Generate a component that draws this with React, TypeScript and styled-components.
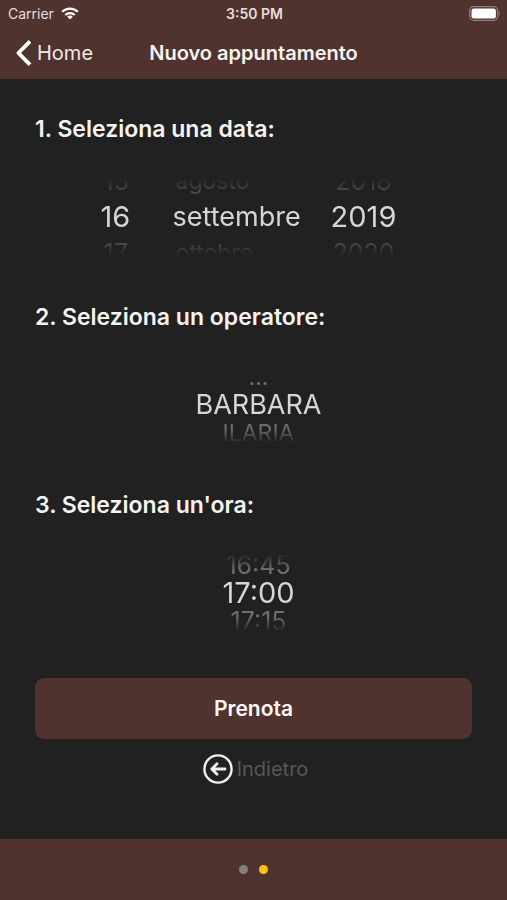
import React, { useState } from "react";
import styled, { createGlobalStyle } from "styled-components";

const GlobalStyle = createGlobalStyle`
  * { box-sizing: border-box; }
  body {
    margin: 0;
    background: #212121;
    color: #f5f3f2;
    font-family: Inter, "Liberation Sans", sans-serif;
  }
  button { font: inherit; border: 0; cursor: pointer; }
`;

const Screen = styled.div`
  display: flex;
  flex-direction: column;
  min-height: 100vh;
`;

const Header = styled.header`
  background: #50332f;
`;

const StatusBar = styled.div`
  display: grid;
  grid-template-columns: 1fr auto 1fr;
  align-items: center;
  height: 27px;
  padding: 0 6px 0 8px;
  font-size: 14px;
  color: #e6dedc;
`;

const Carrier = styled.span`
  display: flex;
  align-items: center;
  gap: 7px;
`;

const Clock = styled.time`
  font-size: 14px;
  font-weight: 600;
`;

const Battery = styled.svg`
  justify-self: end;
`;

const NavBar = styled.nav`
  display: grid;
  grid-template-columns: 1fr auto 1fr;
  align-items: center;
  height: 52px;
  padding: 0 15px;
`;

const HomeLink = styled.a`
  display: flex;
  align-items: center;
  gap: 5px;
  color: #f1e9e7;
  font-size: 20px;
  text-decoration: none;
`;

const Title = styled.h1`
  margin: 0;
  font-size: 20px;
  font-weight: 600;
`;

const Main = styled.main`
  flex: 1;
  display: flex;
  flex-direction: column;
  gap: 46px;
  padding: 37px 35px 0;
`;

const Steps = styled.div`
  display: flex;
  flex-direction: column;
  gap: 48px;
`;

const Heading = styled.h2`
  margin: 0 0 36px;
  font-size: 23px;
  line-height: 26px;
  font-weight: 600;
`;

const Wheels = styled.div<{ $columns?: string }>`
  display: grid;
  grid-template-columns: ${(p) => p.$columns ?? "auto"};
  grid-template-rows: 78px;
  justify-content: center;
  align-items: center;
  padding-right: ${(p) => (p.$columns ? "10px" : "0")};
  padding-left: ${(p) => (p.$columns ? "0" : "10px")};
  overflow: hidden;
  mask-image: linear-gradient(transparent, #000 20%, #000 80%, transparent);
`;

const Wheel = styled.div<{ $align: string }>`
  display: flex;
  flex-direction: column;
  align-items: ${(p) => p.$align};
`;

type OptionProps = { $current: boolean; $pitch: number; $size: number; $faint: boolean };

const Option = styled.button<OptionProps>`
  flex: none;
  height: ${(p) => p.$pitch}px;
  padding: 0 ${(p) => (p.$current ? 0 : 3)}px;
  background: none;
  white-space: nowrap;
  line-height: ${(p) => p.$pitch}px;
  font-size: ${(p) => (p.$current ? p.$size : p.$size - 4)}px;
  color: ${(p) => (p.$current ? "#d6d6d6" : p.$faint ? "#525252" : "#6e6e6e")};
`;

const BookButton = styled.button`
  height: 61px;
  border-radius: 9px;
  background: #50332f;
  color: #fffaf8;
  font-size: 21px;
  font-weight: 600;
`;

const Actions = styled.div`
  display: flex;
  flex-direction: column;
  gap: 15px;
`;

const BackButton = styled.button`
  display: flex;
  align-items: center;
  align-self: center;
  gap: 4px;
  padding: 0 0 0 4px;
  background: none;
  color: #575757;
  font-size: 20px;
`;

const Footer = styled.footer`
  display: flex;
  justify-content: center;
  align-items: center;
  gap: 11px;
  height: 61px;
  background: #50332f;
`;

const Dot = styled.button<{ $active?: boolean }>`
  width: 9px;
  height: 9px;
  padding: 0;
  border-radius: 50%;
  background: ${(p) => (p.$active ? "#fdc10a" : "#83807d")};
`;

type PickerProps = {
  label: string;
  options: string[];
  initial: number;
  pitch?: number;
  size?: number;
  align?: string;
};

function Picker({ label, options, initial, pitch = 28, size = 29, align = "center" }: PickerProps) {
  const [index, setIndex] = useState(initial);
  return (
    <Wheel role="listbox" aria-label={label} $align={align}>
      {[index - 1, index, index + 1].map((i) => (
        <Option
          key={i}
          type="button"
          role="option"
          aria-selected={i === index}
          disabled={!options[i]}
          $current={i === index}
          $pitch={pitch}
          $size={size}
          $faint={pitch > 30}
          onClick={() => setIndex(i)}
        >
          {options[i]}
        </Option>
      ))}
    </Wheel>
  );
}

const days = Array.from({ length: 31 }, (_, i) => String(i + 1));
const months = [
  "gennaio", "febbraio", "marzo", "aprile", "maggio", "giugno",
  "luglio", "agosto", "settembre", "ottobre", "novembre", "dicembre",
];
const years = ["2018", "2019", "2020"];
const operators = ["...", "BARBARA", "ILARIA"];
const hours = ["16:45", "17:00", "17:15"];

export default function App() {
  return (
    <Screen>
      <GlobalStyle />
      <Header>
        <StatusBar>
          <Carrier>
            Carrier
            <svg width="18" height="13" viewBox="0 0 18 13" fill="none" stroke="#fff" strokeWidth="2.2" aria-hidden="true">
              <path d="M1.2 4.8a11 11 0 0 1 15.6 0" />
              <path d="M4.3 8a6.6 6.6 0 0 1 9.4 0" />
              <path d="M9 12.6 6.2 9.8a4 4 0 0 1 5.6 0Z" fill="#fff" stroke="none" />
            </svg>
          </Carrier>
          <Clock>3:50 PM</Clock>
          <Battery width="32" height="15" viewBox="0 0 32 15" aria-label="Batteria">
            <rect x=".7" y=".7" width="28" height="13.6" rx="4" fill="none" stroke="#947f7b" strokeWidth="1.3" />
            <rect x="2.5" y="2.5" width="24.4" height="10" rx="2.3" fill="#fff" />
            <path d="M30 5.2q1.8 2.3 0 4.6Z" fill="#947f7b" />
          </Battery>
        </StatusBar>
        <NavBar>
          <HomeLink href="#home">
            <svg width="17" height="26" viewBox="0 0 17 26" fill="none" stroke="#fff" strokeWidth="3.8" strokeLinejoin="round" aria-hidden="true">
              <path d="M15 1.4 3.4 13 15 24.6" />
            </svg>
            Home
          </HomeLink>
          <Title>Nuovo appuntamento</Title>
        </NavBar>
      </Header>
      <Main>
        <Steps>
          <section>
            <Heading>1. Seleziona una data:</Heading>
            <Wheels $columns="72px 158px 66px">
              <Picker label="Giorno" options={days} initial={15} pitch={36} align="flex-start" />
              <Picker label="Mese" options={months} initial={8} pitch={36} size={27} align="flex-start" />
              <Picker label="Anno" options={years} initial={1} pitch={36} />
            </Wheels>
          </section>
          <section>
            <Heading>2. Seleziona un operatore:</Heading>
            <Wheels>
              <Picker label="Operatore" options={operators} initial={1} size={27} />
            </Wheels>
          </section>
          <section>
            <Heading>3. Seleziona un'ora:</Heading>
            <Wheels>
              <Picker label="Ora" options={hours} initial={1} />
            </Wheels>
          </section>
        </Steps>
        <Actions>
          <BookButton type="button">Prenota</BookButton>
          <BackButton type="button">
            <svg width="30" height="30" viewBox="0 0 30 30" fill="none" stroke="#efefef" aria-hidden="true">
              <circle cx="15" cy="15" r="13.6" strokeWidth="2.4" />
              <path d="M22 15H9.5M14 9.8 8.8 15l5.2 5.2" strokeWidth="2.8" strokeLinecap="round" strokeLinejoin="round" />
            </svg>
            Indietro
          </BackButton>
        </Actions>
      </Main>
      <Footer>
        <Dot type="button" aria-label="Pagina 1" />
        <Dot type="button" aria-label="Pagina 2" $active />
      </Footer>
    </Screen>
  );
}
